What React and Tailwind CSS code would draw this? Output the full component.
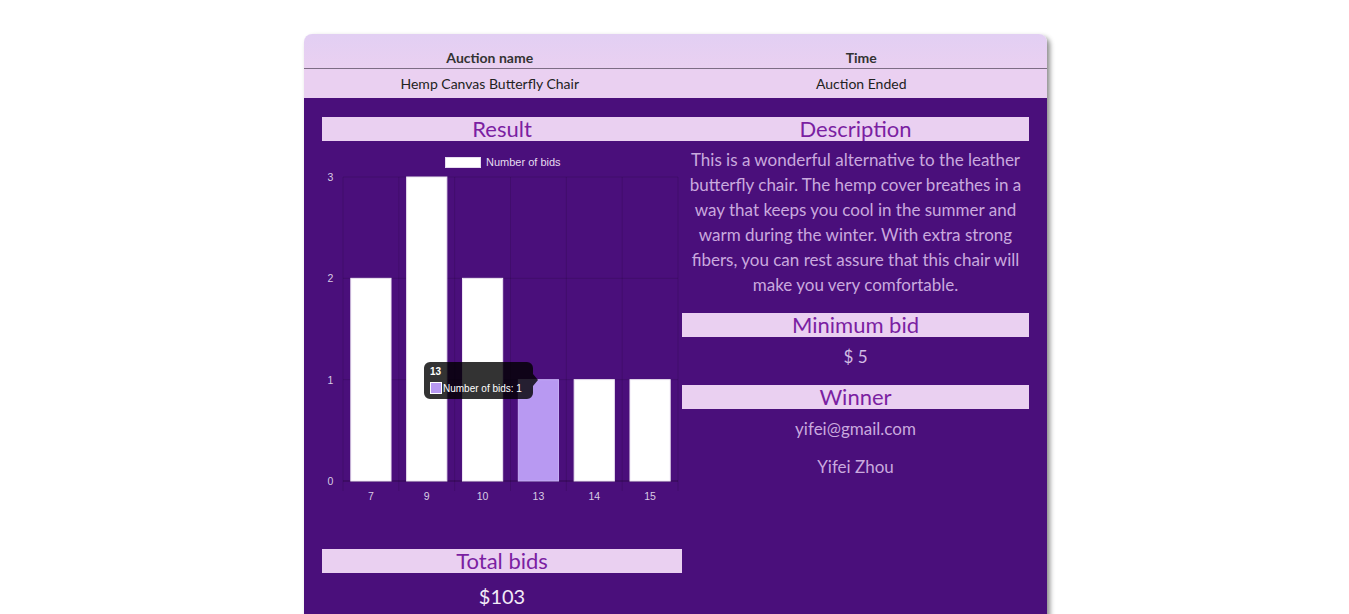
import React from 'react';

const bids = [
  { label: '7', count: 2 },
  { label: '9', count: 3 },
  { label: '10', count: 2 },
  { label: '13', count: 1, active: true },
  { label: '14', count: 1 },
  { label: '15', count: 1 },
];

function BidChart() {
  const left = 21;
  const right = 356;
  const top = 36;
  const bottom = 340;
  const step = (right - left) / bids.length;
  const unit = (bottom - top) / 3;
  const barW = step * 0.72;

  return (
    <svg width="360" height="408" viewBox="0 0 360 408" className="block" style={{ fontFamily: '"Liberation Sans", Arial, sans-serif' }}>
      {/* legend */}
      <rect x="123.5" y="16.5" width="35" height="10" fill="#ffffff" stroke="#e6dcef" />
      <text x="164" y="25" fontSize="11" fill="#e6dcef">Number of bids</text>

      {/* grid */}
      {[0, 1, 2, 3].map((v) => (
        <g key={v}>
          <line x1={left} x2={right} y1={bottom - v * unit} y2={bottom - v * unit} stroke={v === 0 ? 'rgba(0,0,0,0.35)' : 'rgba(0,0,0,0.12)'} />
          <text x="8.5" y={bottom - v * unit + 4} fontSize="10.5" fill="#d8cce4" textAnchor="middle">{v}</text>
        </g>
      ))}
      {bids.map((b, i) => (
        <line key={'g' + i} x1={left + step * i} x2={left + step * i} y1={top} y2={bottom + 10} stroke="rgba(0,0,0,0.12)" />
      ))}
      <line x1={right} x2={right} y1={top} y2={bottom + 10} stroke="rgba(0,0,0,0.12)" />

      {/* bars */}
      {bids.map((b, i) => {
        const cx = left + step * (i + 0.5);
        const h = b.count * unit;
        return (
          <g key={b.label}>
            <rect x={cx - barW / 2} y={bottom - h} width={barW} height={h} fill={b.active ? '#b899f2' : '#ffffff'} stroke={b.active ? '#c6aef5' : '#eee6f4'} />
            <text x={cx} y={bottom + 19} fontSize="10.5" fill="#d8cce4" textAnchor="middle">{b.label}</text>
          </g>
        );
      })}

      {/* tooltip */}
      <path d="M108 221 H205 a6 6 0 0 1 6 6 V233 L216 239 L211 245 V252 a6 6 0 0 1 -6 6 H108 a6 6 0 0 1 -6 -6 V227 a6 6 0 0 1 6 -6 Z" fill="rgba(0,0,0,0.8)" />
      <text x="108" y="233.5" fontSize="10" fontWeight="bold" fill="#ffffff">13</text>
      <rect x="108.5" y="241.5" width="11" height="11" fill="#b899f2" stroke="#ffffff" />
      <text x="121" y="251" fontSize="10" fill="#ffffff">Number of bids: 1</text>
    </svg>
  );
}

function Heading({ children }) {
  return (
    <div className="h-6 bg-[#ead0f1] text-center text-[22px] leading-6 text-[#7b1fa2]">{children}</div>
  );
}

export default function App() {
  return (
    <div className="min-h-screen bg-white pt-[34px]" style={{ fontFamily: 'Lato, "Open Sans", sans-serif' }}>
      <div className="ml-[304px] w-[743px] overflow-hidden rounded-t-lg shadow-[3px_3px_5px_rgba(0,0,0,0.45)]">
        {/* header table */}
        <div className="bg-gradient-to-b from-[#e2cff3] to-[#ead0f1]">
          <div className="grid h-[35px] grid-cols-2 items-end border-b border-[#7d6c85] text-[14px] font-bold text-[#333333]">
            <div className="text-center">Auction name</div>
            <div className="text-center">Time</div>
          </div>
        </div>
        <div className="grid h-[29px] grid-cols-2 items-center bg-[#ead0f1] text-[14px] text-[#222222]">
          <div className="text-center">Hemp Canvas Butterfly Chair</div>
          <div className="text-center">Auction Ended</div>
        </div>

        {/* body */}
        <div className="bg-[#4a0f7b] px-[18px] pt-[19px] pb-8">
          <div className="grid grid-cols-[360px_1fr]">
            <div>
              <Heading>Result</Heading>
              <BidChart />
              <Heading>Total bids</Heading>
              <p className="mt-[11px] text-center text-[20px] leading-6 text-[#f2eaf7]">$103</p>
            </div>
            <div>
              <Heading>Description</Heading>
              <p className="mt-[6px] px-1 text-center text-[17px] leading-[25px] text-[#c9a9de]">
                This is a wonderful alternative to the leather butterfly chair. The hemp cover breathes in a way that keeps you cool in the summer and warm during the winter. With extra strong fibers, you can rest assure that this chair will make you very comfortable.
              </p>
              <div className="mt-[16px]">
                <Heading>Minimum bid</Heading>
              </div>
              <p className="mt-[7px] text-center text-[17px] leading-[25px] text-[#d2bce4]">$ 5</p>
              <div className="mt-[16px]">
                <Heading>Winner</Heading>
              </div>
              <p className="mt-[7px] text-center text-[17px] leading-[25px] text-[#c9a9de]">yifei@gmail.com</p>
              <p className="mt-[13px] text-center text-[17px] leading-[25px] text-[#c9a9de]">Yifei Zhou</p>
            </div>
          </div>
        </div>
      </div>
    </div>
  );
}
